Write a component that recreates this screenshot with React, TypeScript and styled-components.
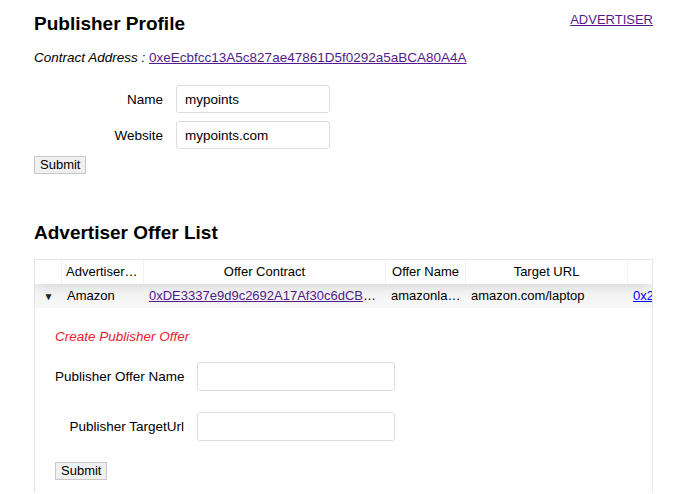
import React from 'react'
import styled, { createGlobalStyle } from 'styled-components'

const GlobalStyle = createGlobalStyle`
  body {
    margin: 0;
    background: #fff;
    font-family: "Liberation Sans", Arial, sans-serif;
    color: #000;
  }
`

const Page = styled.div`
  padding: 12px 42px 0 34px;
`

const TopBar = styled.div`
  display: flex;
  justify-content: space-between;
  align-items: flex-start;
`

const Title = styled.h2`
  margin: 0;
  font-size: 19px;
  font-weight: 700;
  line-height: 24px;
`

const NavLink = styled.a`
  font-size: 13px;
  line-height: 16px;
  color: #551a8b;
  text-decoration: underline;
`

const AddressLine = styled.p`
  margin: 13px 0 0;
  font-size: 13.5px;
  font-style: italic;
  line-height: 18px;
`

const Link = styled.a<{ $blue?: boolean }>`
  color: ${(p) => (p.$blue ? '#0000ee' : '#551a8b')};
  font-style: normal;
  text-decoration: underline;
`

const Form = styled.form<{ $labelWidth: number; $gap: number; $inputWidth: number; $top?: number }>`
  display: grid;
  grid-template-columns: ${(p) => p.$labelWidth}px ${(p) => p.$inputWidth}px;
  column-gap: 13px;
  row-gap: ${(p) => p.$gap}px;
  align-items: center;
  margin-top: ${(p) => p.$top ?? 0}px;
`

const Label = styled.label`
  text-align: right;
  font-size: 13.5px;
  white-space: nowrap;
`

const Input = styled.input<{ $h: number }>`
  box-sizing: border-box;
  height: ${(p) => p.$h}px;
  width: 100%;
  border: 1px solid #ddd;
  border-radius: 3px;
  padding: 0 8px;
  font: inherit;
  font-size: 13.5px;
  color: #000;
  outline: none;
`

const Button = styled.button`
  box-sizing: border-box;
  height: 18px;
  padding: 0 5px;
  background: #f0f0f0;
  border: 1px solid #c8c8c8;
  border-radius: 0;
  font-family: inherit;
  font-size: 13px;
  line-height: 16px;
  color: #000;
`

const Section = styled.div`
  margin-top: 47px;
`

const Table = styled.div`
  margin-top: 14px;
  border: 1px solid rgba(0, 0, 0, 0.1);
  border-bottom: none;
  overflow: hidden;
  font-size: 13px;
`

const Cols = '27px 82px 242px 80px 162px 150px'

const HeaderRow = styled.div`
  display: grid;
  grid-template-columns: ${Cols};
  height: 24px;
  position: relative;
  box-shadow: 0 2px 15px 0 rgba(0, 0, 0, 0.15);
  z-index: 1;
  background: #fff;
`

const HeadCell = styled.div`
  border-right: 1px solid rgba(0, 0, 0, 0.05);
  padding: 0 4px;
  line-height: 24px;
  text-align: center;
  white-space: nowrap;
  overflow: hidden;
  text-overflow: ellipsis;
`

const BodyRow = styled.div`
  display: grid;
  grid-template-columns: ${Cols};
  height: 24px;
  background: rgba(0, 0, 0, 0.035);
`

const Cell = styled.div`
  padding: 0 5px;
  line-height: 24px;
  white-space: nowrap;
  overflow: hidden;
  text-overflow: ellipsis;
`

const Expander = styled.div`
  display: flex;
  align-items: center;
  justify-content: center;
  font-size: 10px;
  color: #222;
`

const SubPanel = styled.div`
  padding: 20px 20px 12px;
`

const SubTitle = styled.p`
  margin: 0 0 16px;
  font-size: 13.5px;
  line-height: 18px;
  font-style: italic;
  color: #e8202f;
`

const ButtonWrap = styled.div<{ $top: number }>`
  margin-top: ${(p) => p.$top}px;
`

export default function App() {
  return (
    <>
      <GlobalStyle />
      <Page>
        <TopBar>
          <Title>Publisher Profile</Title>
          <NavLink href="#">ADVERTISER</NavLink>
        </TopBar>
        <AddressLine>
          Contract Address : <Link href="#">0xeEcbfcc13A5c827ae47861D5f0292a5aBCA80A4A</Link>
        </AddressLine>
        <Form $labelWidth={129} $gap={8} $inputWidth={154} $top={18}>
          <Label>Name</Label>
          <Input $h={28} defaultValue="mypoints" />
          <Label>Website</Label>
          <Input $h={28} defaultValue="mypoints.com" />
        </Form>
        <ButtonWrap $top={6}>
          <Button type="button">Submit</Button>
        </ButtonWrap>

        <Section>
          <Title>Advertiser Offer List</Title>
          <Table>
            <HeaderRow>
              <HeadCell />
              <HeadCell>Advertiser Name</HeadCell>
              <HeadCell>Offer Contract</HeadCell>
              <HeadCell>Offer Name</HeadCell>
              <HeadCell>Target URL</HeadCell>
              <HeadCell>Publisher Offer</HeadCell>
            </HeaderRow>
            <BodyRow>
              <Expander>▼</Expander>
              <Cell>Amazon</Cell>
              <Cell>
                <Link href="#">0xDE3337e9d9c2692A17Af30c6dCB5a1c1b8e0D4F2</Link>
              </Cell>
              <Cell>amazonlaptop</Cell>
              <Cell>amazon.com/laptop</Cell>
              <Cell>
                <Link $blue href="#">0x2a8b</Link>
              </Cell>
            </BodyRow>
            <SubPanel>
              <SubTitle>Create Publisher Offer</SubTitle>
              <Form $labelWidth={129} $gap={21} $inputWidth={198}>
                <Label>Publisher Offer Name</Label>
                <Input $h={29} />
                <Label>Publisher TargetUrl</Label>
                <Input $h={29} />
              </Form>
              <ButtonWrap $top={21}>
                <Button type="button">Submit</Button>
              </ButtonWrap>
            </SubPanel>
          </Table>
        </Section>
      </Page>
    </>
  )
}
